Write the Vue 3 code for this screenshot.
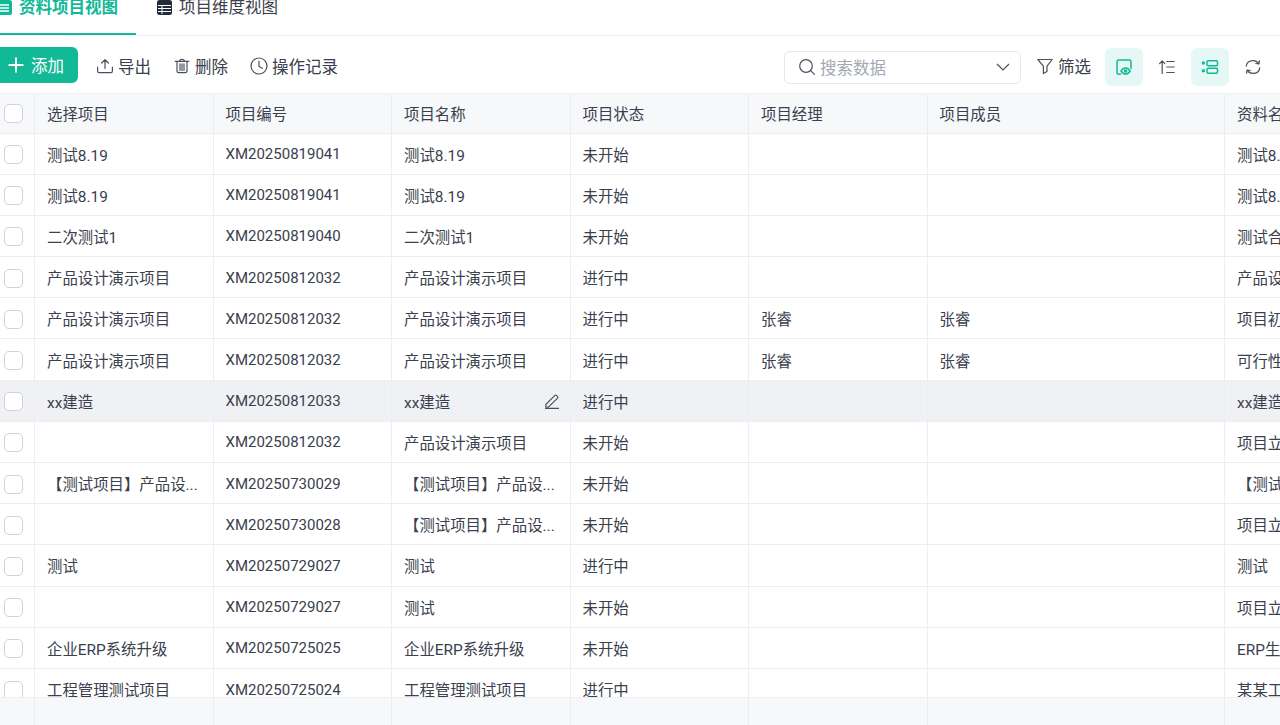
<script setup>
const columns = ['选择项目', '项目编号', '项目名称', '项目状态', '项目经理', '项目成员', '资料名称']

const rows = [
  { pick: '测试8.19', code: 'XM20250819041', name: '测试8.19', status: '未开始', manager: '', members: '', doc: '测试8.19' },
  { pick: '测试8.19', code: 'XM20250819041', name: '测试8.19', status: '未开始', manager: '', members: '', doc: '测试8.19' },
  { pick: '二次测试1', code: 'XM20250819040', name: '二次测试1', status: '未开始', manager: '', members: '', doc: '测试合同' },
  { pick: '产品设计演示项目', code: 'XM20250812032', name: '产品设计演示项目', status: '进行中', manager: '', members: '', doc: '产品设计' },
  { pick: '产品设计演示项目', code: 'XM20250812032', name: '产品设计演示项目', status: '进行中', manager: '张睿', members: '张睿', doc: '项目初步' },
  { pick: '产品设计演示项目', code: 'XM20250812032', name: '产品设计演示项目', status: '进行中', manager: '张睿', members: '张睿', doc: '可行性研究' },
  { pick: 'xx建造', code: 'XM20250812033', name: 'xx建造', status: '进行中', manager: '', members: '', doc: 'xx建造', hover: true },
  { pick: '', code: 'XM20250812032', name: '产品设计演示项目', status: '未开始', manager: '', members: '', doc: '项目立项' },
  { pick: '【测试项目】产品设...', code: 'XM20250730029', name: '【测试项目】产品设...', status: '未开始', manager: '', members: '', doc: '【测试项目】' },
  { pick: '', code: 'XM20250730028', name: '【测试项目】产品设...', status: '未开始', manager: '', members: '', doc: '项目立项' },
  { pick: '测试', code: 'XM20250729027', name: '测试', status: '进行中', manager: '', members: '', doc: '测试' },
  { pick: '', code: 'XM20250729027', name: '测试', status: '未开始', manager: '', members: '', doc: '项目立项' },
  { pick: '企业ERP系统升级', code: 'XM20250725025', name: '企业ERP系统升级', status: '未开始', manager: '', members: '', doc: 'ERP生产' },
  { pick: '工程管理测试项目', code: 'XM20250725024', name: '工程管理测试项目', status: '进行中', manager: '', members: '', doc: '某某工程' }
]
</script>

<template>
  <div class="page">
    <div class="tabs">
      <div class="tab active">
        <svg class="tab-icon" viewBox="0 0 15 15"><rect x="0" y="0" width="15" height="15" rx="2.500" fill="#12b997" /><path d="M3 5h9M3 8h9M3 11h9" stroke="#fff" stroke-width="1.300" /></svg>
        <span>资料项目视图</span>
      </div>
      <div class="tab">
        <svg class="tab-icon" viewBox="0 0 15 15"><rect x="0" y="0" width="15" height="15" rx="2.500" fill="#232a3a" /><path d="M1 5.500h13M1 8.500h13M1 11.500h13M5 5.500V14" stroke="#fff" stroke-width="1" /></svg>
        <span>项目维度视图</span>
      </div>
    </div>

    <div class="toolbar">
      <button class="add-btn">
        <svg viewBox="0 0 16 16" class="plus"><path d="M8 0.500v15M0.500 8h15" stroke="#fff" stroke-width="2" /></svg>
        添加
      </button>
      <div class="tool">
        <svg class="ico" viewBox="0 0 18 18"><path d="M9 11.500V2.800M5.600 6 9 2.600 12.400 6M1.600 10v4.200c0 .8.600 1.400 1.400 1.400h12c.8 0 1.400-.6 1.400-1.400V10" /></svg>
        导出
      </div>
      <div class="tool">
        <svg class="ico" viewBox="0 0 18 18"><path d="M2.200 4.300h13.600M6.600 4.200c0-1.200.7-1.900 2.400-1.900s2.400.7 2.400 1.900M4 4.400v9.400c0 1.200.7 1.900 1.900 1.900h6.200c1.200 0 1.900-.7 1.900-1.900V4.400M7 6.800v6.600M9 6.800v6.600M11 6.800v6.600" /></svg>
        删除
      </div>
      <div class="tool">
        <svg class="ico" viewBox="0 0 18 18"><circle cx="9" cy="9" r="8" /><path d="M9 4.200V9.400l3.300 1.900" /></svg>
        操作记录
      </div>

      <div class="spacer"></div>

      <div class="search">
        <svg class="ico" viewBox="0 0 18 18"><circle cx="8" cy="8" r="6.300" /><path d="m12.600 12.600 3.800 3.800" /></svg>
        <span class="search-text">搜索数据</span>
        <svg class="chev" viewBox="0 0 14 14"><path d="m1 4 6 6 6-6" /></svg>
      </div>
      <div class="tool filter">
        <svg class="ico" viewBox="0 0 18 18"><path d="M1.800 2.500h14.400L11 9.200v5.300L7.400 16.500V9.200z" /></svg>
        筛选
      </div>
      <div class="square on">
        <svg class="ico green" viewBox="0 0 18 18"><path d="M5.500 16.300H4C2.800 16.300 2 15.500 2 14.300V4C2 2.800 2.800 2 4 2h10c1.200 0 2 .8 2 2v6.500" /><path d="M6 13c1.300-2 2.800-3 4.600-3s3.300 1 4.600 3c-1.300 2-2.800 3-4.600 3S7.300 15 6 13z" /><circle cx="10.600" cy="13" r="1" /></svg>
      </div>
      <div class="square">
        <svg class="ico" viewBox="0 0 18 18"><path d="M4.200 15.500V3M1.600 5.600 4.200 3l2.600 2.600M8.800 3.500h7.400M8.800 9h7.400M8.800 14.500h7.400" /></svg>
      </div>
      <div class="square on">
        <svg class="ico green" viewBox="0 0 18 18"><rect x="6" y="2.800" width="10.500" height="5" rx="1.200" /><rect x="6" y="10.200" width="10.500" height="5" rx="1.200" /><path d="M1.500 4.300h1.800M1.500 5.800h1.800M1.500 12h1.800M1.500 13.500h1.800" stroke-width="1.600" /></svg>
      </div>
      <div class="square">
        <svg class="ico" viewBox="0 0 18 18"><path d="M2.200 8.200C2.700 4.800 5.500 2.600 9 2.600c2.400 0 4.500 1.100 5.700 3M15.800 9.800c-.5 3.400-3.300 5.600-6.800 5.600-2.400 0-4.500-1.100-5.700-3" /><path d="m15.400 2.800-.5 3.100-3.100-.4M2.600 15.200l.5-3.100 3.100.4" /></svg>
      </div>
    </div>

    <div class="table">
      <div class="row head">
        <div class="cell check"><span class="box"></span></div>
        <div v-for="col in columns" :key="col" class="cell">{{ col }}</div>
      </div>
      <div class="body">
        <div v-for="(row, i) in rows" :key="i" class="row" :class="{ hover: row.hover }">
          <div class="cell check"><span class="box"></span></div>
          <div class="cell"><span class="txt">{{ row.pick }}</span></div>
          <div class="cell"><span class="txt code">{{ row.code }}</span></div>
          <div class="cell">
            <span class="txt">{{ row.name }}</span>
            <svg v-if="row.hover" class="edit" viewBox="0 0 16 16"><path d="M1.800 11.500 10.600 2.600c.6-.6 1.400-.6 2 0l.8.8c.6.6.6 1.400 0 2L4.500 14H1.800zM1 15.400h14" /></svg>
          </div>
          <div class="cell"><span class="txt">{{ row.status }}</span></div>
          <div class="cell"><span class="txt">{{ row.manager }}</span></div>
          <div class="cell"><span class="txt">{{ row.members }}</span></div>
          <div class="cell"><span class="txt">{{ row.doc }}</span></div>
        </div>
      </div>
      <div class="row foot">
        <div class="cell check"></div>
        <div v-for="col in columns" :key="col" class="cell"></div>
      </div>
    </div>
  </div>
</template>

<style scoped>
.page {
  width: 1280px;
  height: 725px;
  overflow: hidden;
  background: #fff;
  font-family: Roboto, "Noto Sans CJK SC", sans-serif;
  font-size: 15.4px;
  color: #3a404d;
}

.tabs {
  display: flex;
  height: 36px;
  border-bottom: 1px solid #eff1f4;
  box-sizing: border-box;
  overflow: hidden;
  font-size: 16.500px;
}

.tab {
  display: flex;
  align-items: flex-start;
  gap: 7px;
  height: 52px;
  margin-top: -17px;
  padding: 12px 18px 0 0;
  box-sizing: border-box;
  line-height: 26px;
  border-bottom: 2px solid transparent;
  flex: none;
}

.tab.active {
  margin-left: -3px;
  margin-right: 21px;
  color: #12b997;
  font-weight: 600;
  border-bottom-color: #12b997;
}

.tab-icon {
  width: 15px;
  height: 15px;
  flex: none;
  margin-top: 5px;
}

.toolbar {
  display: flex;
  align-items: center;
  height: 57px;
  box-sizing: border-box;
  margin-left: -8px;
  padding-right: 8px;
  padding-top: 5px;
  font-size: 16.500px;
}

.add-btn {
  display: flex;
  align-items: center;
  gap: 7px;
  height: 36px;
  width: 86px;
  margin-top: -4px;
  padding: 0 0 0 16px;
  border: none;
  border-radius: 6px;
  background: #12b997;
  color: #fff;
  font: inherit;
  margin-right: 18px;
}

.plus {
  width: 16px;
  height: 16px;
}

.tool {
  display: flex;
  align-items: center;
  gap: 4px;
  margin-top: -2px;
  margin-right: 22px;
  white-space: nowrap;
}

.ico {
  width: 18px;
  height: 18px;
  flex: none;
  fill: none;
  stroke: #4a505c;
  stroke-width: 1.200;
  stroke-linecap: round;
  stroke-linejoin: round;
}

.ico.green {
  stroke: #12b997;
  stroke-width: 1.500;
}

.spacer {
  flex: 1;
}

.search {
  display: flex;
  align-items: center;
  width: 237px;
  height: 33px;
  box-sizing: border-box;
  padding: 0 10px 0 13px;
  border: 1px solid #e6e8ec;
  border-radius: 6px;
  margin-right: 15px;
}

.search-text {
  flex: 1;
  margin-left: 4px;
  color: #a3a8b2;
}

.chev {
  width: 14px;
  height: 14px;
  fill: none;
  stroke: #4a505c;
  stroke-width: 1.200;
}

.filter {
  margin-right: 14px;
}

.square {
  display: flex;
  align-items: center;
  justify-content: center;
  width: 38px;
  height: 38px;
  border-radius: 6px;
  margin-right: 5px;
}

.square:last-child {
  margin-right: 0;
}

.square.on {
  background: #e6f8f5;
}

.table {
  display: flex;
  flex-direction: column;
  width: 1400px;
  height: 632px;
  border-top: 1px solid #eff1f4;
  box-sizing: border-box;
}

.body {
  flex: 1;
  overflow: hidden;
}

.row {
  display: grid;
  grid-template-columns: 35px 178.500px 178.500px 178.500px 178.500px 178.500px 297.500px 200px;
  height: 41.200px;
  box-sizing: border-box;
  border-bottom: 1px solid #eceef2;
}

.row.head {
  height: 39.500px;
  flex: none;
  background: #f7f8fa;
}

.row.hover {
  background: #f0f1f5;
}

.row.foot {
  height: 28px;
  flex: none;
  background: #f7f8fa;
  border-top: 1px solid #eceef2;
  border-bottom: none;
}

.cell {
  display: flex;
  align-items: center;
  min-width: 0;
  padding: 0 12px;
  box-sizing: border-box;
  border-right: 1px solid #eceef2;
}

.cell.check {
  padding: 0 0 0 4px;
}

.txt {
  overflow: hidden;
  white-space: nowrap;
  flex: 1;
  min-width: 0;
}

.code {
  font-size: 15px;
  padding-top: 1px;
}

.box {
  display: block;
  width: 19px;
  height: 19px;
  box-sizing: border-box;
  border: 1px solid #cfd2da;
  border-radius: 5px;
  background: #fff;
}

.body .box {
  margin-top: 2px;
}

.edit {
  width: 16px;
  height: 16px;
  flex: none;
  fill: none;
  stroke: #4a505c;
  stroke-width: 1.100;
  margin-right: -2px;
}
</style>

<style>
html, body {
  margin: 0;
  overflow: hidden;
}
</style>
